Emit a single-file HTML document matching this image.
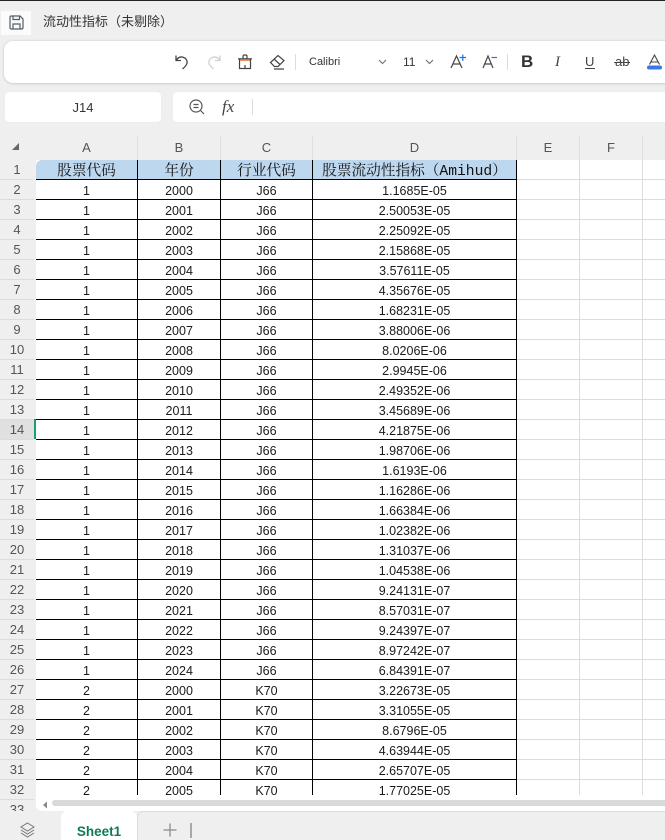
<!DOCTYPE html>
<html><head><meta charset="utf-8">
<style>
html,body{margin:0;padding:0;height:840px;overflow:hidden}
body{width:665px;height:840px;overflow:hidden;position:relative;background:#efefef;font-family:"Liberation Sans","Noto Sans CJK SC",sans-serif;color:#222}
.a{position:absolute}
#sheet{position:absolute;left:36px;top:160px;width:629px;height:651px;background:#fff;border-bottom-left-radius:6px;overflow:hidden}
#grid{position:absolute;left:481px;top:0;width:148px;height:635px;background:
 repeating-linear-gradient(to bottom,transparent 0,transparent 19px,#dcdcdc 19px,#dcdcdc 20px),
 linear-gradient(to right,transparent 62px,#dcdcdc 62px,#dcdcdc 63px,transparent 63px,transparent 125px,#dcdcdc 125px,#dcdcdc 126px,transparent 126px)}
#clip{position:absolute;left:0;top:0;width:481px;height:635px;overflow:hidden}
table{border-collapse:separate;border-spacing:0;table-layout:fixed;width:481px}
tr{height:20px}
td{height:19px;padding:0;border-right:1px solid #000;border-bottom:1px solid #000;text-align:center;font-size:12.5px;line-height:19px;color:#1a1a1a;overflow:hidden;white-space:nowrap;box-sizing:content-box}
td>div{height:19px;line-height:19px;position:relative;top:2px;overflow:visible}
tr.h td{background:#bdd7ee;font-family:"Liberation Mono","Noto Serif CJK SC",serif;font-size:14.67px;color:#111}
tr.h td div{top:0;line-height:19px}
tr.h td span{position:relative;top:3px}
tr.h td:first-child{border-top-left-radius:6px}
.ch{position:absolute;top:136px;height:24px;line-height:24px;text-align:center;font-size:13px;color:#555;border-right:1px solid #dcdfe4;box-sizing:border-box}
.rh{position:absolute;left:0;width:34px;height:20px;line-height:19px;text-align:center;font-size:13px;color:#555;border-bottom:1px solid #dcdcdc;box-sizing:border-box}
svg{position:absolute;overflow:visible}
</style></head><body>
<div class="a" style="left:0;top:0;width:665px;height:1px;background:#222"></div>

<div class="a" style="left:1px;top:11px;width:30px;height:24px;background:#fbfbfb"></div>
<svg style="left:9px;top:15px" width="15" height="15" fill="none" stroke="#555c66" stroke-width="1.2"><path d="M1 2.5Q1 1 2.5 1H11L14 4V12.5Q14 14 12.5 14H2.5Q1 14 1 12.5Z"/><path d="M4 14V9H11V14M4 1V4.5H10.5V1"/></svg>
<div class="a" style="left:43px;top:13px;font-size:13px;line-height:18px;color:#333;white-space:nowrap">流动性指标（未剔除）</div>

<div class="a" style="left:4px;top:41px;width:680px;height:42px;background:#fff;border-radius:9px;box-shadow:0 0 2px #ccc,0 1px 2px #d5d5d5"></div>
<!-- undo -->
<svg style="left:174px;top:54px" width="16" height="16" fill="none" stroke="#444" stroke-width="1.3"><path d="M2 1.5V6.5H7M2.2 6.3C4 3.5 6.5 2.5 9 3.2C12.5 4.2 14 7.5 12.500 10.500C11.700 12 10.500 13.300 8.500 15"/></svg>
<!-- redo -->
<svg style="left:206px;top:54px" width="16" height="16" fill="none" stroke="#d0d0d0" stroke-width="1.3"><path d="M14 1.500V6.500H9M13.800 6.300C12 3.500 9.500 2.500 7 3.200C3.500 4.200 2 7.500 3.500 10.500C4.300 12 5.500 13.300 7.500 15"/></svg>
<!-- format painter -->
<svg style="left:237px;top:54px" width="16" height="16" fill="none" stroke="#444" stroke-width="1.2"><path d="M6 4.500V2.500Q6 1 7.500 1H8.500Q10 1 10 2.500V4.500"/><path d="M1 4.800H15"/><path d="M2.500 6.200H13.500" stroke="#e8743b" stroke-width="1.200"/><path d="M2.500 5V14.500H13.500V5M8 11V14.500"/></svg>
<!-- eraser -->
<svg style="left:269px;top:54px" width="17" height="16" fill="none" stroke="#444" stroke-width="1.2"><path d="M1.500 8.500L9 1.500L15 6.500L9 12.500H5.500Z"/><path d="M5 5L11 10.500M5 15H15"/></svg>
<div class="a" style="left:295px;top:54px;width:1px;height:16px;background:#ddd"></div>
<div class="a" style="left:309px;top:55px;font-size:11px;line-height:14px;color:#333">Calibri</div>
<svg style="left:378px;top:59px" width="9" height="6" fill="none" stroke="#777" stroke-width="1.2"><path d="M1 1L4.500 4.500L8 1"/></svg>
<div class="a" style="left:403px;top:55px;font-size:12px;line-height:14px;color:#333">11</div>
<svg style="left:425px;top:59px" width="9" height="6" fill="none" stroke="#777" stroke-width="1.2"><path d="M1 1L4.500 4.500L8 1"/></svg>
<!-- A+ -->
<svg style="left:450px;top:53px" width="16" height="16" fill="none" stroke="#444" stroke-width="1.2"><path d="M1 15L6.500 3L12 15M3 11H10"/><path d="M9.500 4.500H16M12.800 1.500V8" stroke="#1a73e8"/></svg>
<!-- A- -->
<svg style="left:482px;top:53px" width="16" height="16" fill="none" stroke="#444" stroke-width="1.2"><path d="M1 15L6 3L11 15M3 11H9.500"/><path d="M9.500 4.500H15" stroke="#1a73e8"/></svg>
<div class="a" style="left:507px;top:54px;width:1px;height:16px;background:#ddd"></div>
<div class="a" style="left:521px;top:52px;font-size:17px;line-height:19px;font-weight:bold;color:#333">B</div>
<div class="a" style="left:555px;top:54px;font-size:15px;line-height:16px;font-style:italic;font-family:'Liberation Serif',serif;color:#444">I</div>
<div class="a" style="left:585px;top:54px;font-size:13px;line-height:15px;color:#444">U</div>
<div class="a" style="left:585px;top:68px;width:10px;height:1px;background:#444"></div>
<div class="a" style="left:615px;top:54px;font-size:13px;line-height:15px;color:#444">ab</div>
<div class="a" style="left:614px;top:62px;width:16px;height:1px;background:#444"></div>
<svg style="left:647px;top:54px" width="16" height="16" fill="none" stroke="#444" stroke-width="1.1"><path d="M2.500 10.500L7.500 1L12.500 10.500M4 8H11"/><rect x="0" y="11.500" width="15" height="4" rx="2" fill="#3b78e7" stroke="none"/></svg>

<div class="a" style="left:5px;top:92px;width:156px;height:30px;background:#fff;border-radius:4px;box-shadow:0 0 1px #ddd;text-align:center;font-size:13px;line-height:31px;color:#333">J14</div>
<div class="a" style="left:173px;top:92px;width:500px;height:30px;background:#fff;border-radius:4px;box-shadow:0 0 1px #ddd"></div>
<svg style="left:189px;top:99px" width="16" height="16" fill="none" stroke="#555" stroke-width="1.2"><circle cx="7" cy="7" r="6"/><path d="M4.500 5.500H9.500M4.500 8.500H9.500M11.500 11.500L15 15"/></svg>
<div class="a" style="left:222px;top:97px;font-family:'Liberation Serif',serif;font-style:italic;font-size:17px;line-height:19px;color:#444">fx</div>
<div class="a" style="left:252px;top:99px;width:1px;height:16px;background:#ddd"></div>

<!-- column headers -->
<svg style="left:11px;top:142px" width="9" height="9"><path d="M8 1V8H1Z" fill="#666"/></svg>
<div class="ch" style="left:36px;width:102px">A</div>
<div class="ch" style="left:138px;width:83px">B</div>
<div class="ch" style="left:221px;width:92px">C</div>
<div class="ch" style="left:313px;width:204px">D</div>
<div class="ch" style="left:517px;width:63px">E</div>
<div class="ch" style="left:580px;width:63px">F</div>

<!-- row headers -->
<div class="a" style="left:0;top:160px;width:36px;height:651px;overflow:hidden">
<div class="rh" style="top:0">1</div><div class="rh" style="top:20px">2</div><div class="rh" style="top:40px">3</div><div class="rh" style="top:60px">4</div><div class="rh" style="top:80px">5</div><div class="rh" style="top:100px">6</div><div class="rh" style="top:120px">7</div><div class="rh" style="top:140px">8</div><div class="rh" style="top:160px">9</div><div class="rh" style="top:180px">10</div><div class="rh" style="top:200px">11</div><div class="rh" style="top:220px">12</div><div class="rh" style="top:240px">13</div><div class="rh" style="top:260px;background:#e0e0e0">14</div><div class="rh" style="top:280px">15</div><div class="rh" style="top:300px">16</div><div class="rh" style="top:320px">17</div><div class="rh" style="top:340px">18</div><div class="rh" style="top:360px">19</div><div class="rh" style="top:380px">20</div><div class="rh" style="top:400px">21</div><div class="rh" style="top:420px">22</div><div class="rh" style="top:440px">23</div><div class="rh" style="top:460px">24</div><div class="rh" style="top:480px">25</div><div class="rh" style="top:500px">26</div><div class="rh" style="top:520px">27</div><div class="rh" style="top:540px">28</div><div class="rh" style="top:560px">29</div><div class="rh" style="top:580px">30</div><div class="rh" style="top:600px">31</div><div class="rh" style="top:620px">32</div><div class="rh" style="top:640px">33</div>
<div class="a" style="left:34px;top:259px;width:2px;height:20px;background:#1e9e6e"></div>
</div>

<div id="sheet">
<div id="grid"></div>
<div id="clip">
<table>
<colgroup><col style="width:102px"><col style="width:83px"><col style="width:92px"><col style="width:204px"></colgroup>
<tr class="h"><td><div><span>股票代码</span></div></td><td><div><span>年份</span></div></td><td><div><span>行业代码</span></div></td><td><div><span>股票流动性指标（Amihud）</span></div></td></tr>
<tr><td><div>1</div></td><td><div>2000</div></td><td><div>J66</div></td><td><div>1.1685E-05</div></td></tr>
<tr><td><div>1</div></td><td><div>2001</div></td><td><div>J66</div></td><td><div>2.50053E-05</div></td></tr>
<tr><td><div>1</div></td><td><div>2002</div></td><td><div>J66</div></td><td><div>2.25092E-05</div></td></tr>
<tr><td><div>1</div></td><td><div>2003</div></td><td><div>J66</div></td><td><div>2.15868E-05</div></td></tr>
<tr><td><div>1</div></td><td><div>2004</div></td><td><div>J66</div></td><td><div>3.57611E-05</div></td></tr>
<tr><td><div>1</div></td><td><div>2005</div></td><td><div>J66</div></td><td><div>4.35676E-05</div></td></tr>
<tr><td><div>1</div></td><td><div>2006</div></td><td><div>J66</div></td><td><div>1.68231E-05</div></td></tr>
<tr><td><div>1</div></td><td><div>2007</div></td><td><div>J66</div></td><td><div>3.88006E-06</div></td></tr>
<tr><td><div>1</div></td><td><div>2008</div></td><td><div>J66</div></td><td><div>8.0206E-06</div></td></tr>
<tr><td><div>1</div></td><td><div>2009</div></td><td><div>J66</div></td><td><div>2.9945E-06</div></td></tr>
<tr><td><div>1</div></td><td><div>2010</div></td><td><div>J66</div></td><td><div>2.49352E-06</div></td></tr>
<tr><td><div>1</div></td><td><div>2011</div></td><td><div>J66</div></td><td><div>3.45689E-06</div></td></tr>
<tr><td><div>1</div></td><td><div>2012</div></td><td><div>J66</div></td><td><div>4.21875E-06</div></td></tr>
<tr><td><div>1</div></td><td><div>2013</div></td><td><div>J66</div></td><td><div>1.98706E-06</div></td></tr>
<tr><td><div>1</div></td><td><div>2014</div></td><td><div>J66</div></td><td><div>1.6193E-06</div></td></tr>
<tr><td><div>1</div></td><td><div>2015</div></td><td><div>J66</div></td><td><div>1.16286E-06</div></td></tr>
<tr><td><div>1</div></td><td><div>2016</div></td><td><div>J66</div></td><td><div>1.66384E-06</div></td></tr>
<tr><td><div>1</div></td><td><div>2017</div></td><td><div>J66</div></td><td><div>1.02382E-06</div></td></tr>
<tr><td><div>1</div></td><td><div>2018</div></td><td><div>J66</div></td><td><div>1.31037E-06</div></td></tr>
<tr><td><div>1</div></td><td><div>2019</div></td><td><div>J66</div></td><td><div>1.04538E-06</div></td></tr>
<tr><td><div>1</div></td><td><div>2020</div></td><td><div>J66</div></td><td><div>9.24131E-07</div></td></tr>
<tr><td><div>1</div></td><td><div>2021</div></td><td><div>J66</div></td><td><div>8.57031E-07</div></td></tr>
<tr><td><div>1</div></td><td><div>2022</div></td><td><div>J66</div></td><td><div>9.24397E-07</div></td></tr>
<tr><td><div>1</div></td><td><div>2023</div></td><td><div>J66</div></td><td><div>8.97242E-07</div></td></tr>
<tr><td><div>1</div></td><td><div>2024</div></td><td><div>J66</div></td><td><div>6.84391E-07</div></td></tr>
<tr><td><div>2</div></td><td><div>2000</div></td><td><div>K70</div></td><td><div>3.22673E-05</div></td></tr>
<tr><td><div>2</div></td><td><div>2001</div></td><td><div>K70</div></td><td><div>3.31055E-05</div></td></tr>
<tr><td><div>2</div></td><td><div>2002</div></td><td><div>K70</div></td><td><div>8.6796E-05</div></td></tr>
<tr><td><div>2</div></td><td><div>2003</div></td><td><div>K70</div></td><td><div>4.63944E-05</div></td></tr>
<tr><td><div>2</div></td><td><div>2004</div></td><td><div>K70</div></td><td><div>2.65707E-05</div></td></tr>
<tr><td><div>2</div></td><td><div>2005</div></td><td><div>K70</div></td><td><div>1.77025E-05</div></td></tr>
</table>
</div>
<svg style="left:6px;top:641px" width="6" height="8"><path d="M5 0.500V7.500L1 4Z" fill="#888"/></svg>
<div class="a" style="left:16px;top:640px;width:640px;height:6px;background:#d9d9d9;border-radius:3px"></div>
</div>

<!-- bottom bar -->
<div class="a" style="left:137px;top:811px;width:528px;height:29px;background:#efefef;border-top:1px solid #dcdcdc;border-left:1px solid #dcdcdc;border-top-left-radius:6px;box-sizing:border-box"></div>
<div class="a" style="left:61px;top:811px;width:76px;height:29px;background:#fff;border-radius:6px 6px 0 0;text-align:center;font-size:13.5px;font-weight:bold;line-height:41px;color:#0f7b55">Sheet1</div>
<div class="a" style="left:36px;top:811px;width:25px;height:29px;background:#efefef"></div>
<svg style="left:20px;top:822px" width="15" height="16" fill="none" stroke="#777" stroke-width="1"><path d="M7.500 1L14 5L7.500 9L1 5Z"/><path d="M1 8L7.500 12L14 8M1 11L7.500 15L14 11"/></svg>
<svg style="left:163px;top:823px" width="14" height="14" fill="none" stroke="#8a8a8a" stroke-width="1.300"><path d="M0.500 7H13.500M7 0.500V13.500"/></svg>
<div class="a" style="left:190px;top:823px;width:2px;height:15px;background:#a8a8a8"></div>
</body></html>
